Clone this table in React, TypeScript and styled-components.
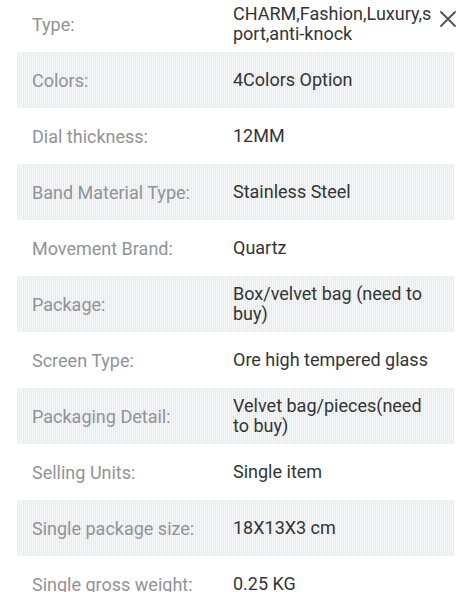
import styled, { createGlobalStyle } from 'styled-components'

const GlobalStyle = createGlobalStyle`
  html, body {
    margin: 0;
    padding: 0;
    background: #ffffff;
    font-family: Roboto, "Noto Sans", sans-serif;
    overflow: hidden;
  }
`

const Sheet = styled.div`
  position: relative;
  width: 475px;
  height: 592px;
  overflow: hidden;
`

const SpecList = styled.div`
  display: flex;
  flex-direction: column;
  margin-top: -4px;
  padding: 0 21px 0 17px;
`

const SpecRow = styled.div<{ $shaded: boolean }>`
  display: grid;
  grid-template-columns: 201px 1fr;
  align-items: center;
  height: 56px;
  padding-left: 15px;
  background: ${props =>
    props.$shaded
      ? 'repeating-linear-gradient(90deg, #e6ebee 0 1px, #f6f8f9 1px 2px)'
      : 'transparent'};
`

const Label = styled.span`
  font-size: 18px;
  color: #919397;
`

const Value = styled.span<{ $breakAll?: boolean }>`
  font-size: 18px;
  line-height: 20px;
  color: #333436;
  max-width: 202px;
  word-break: ${props => (props.$breakAll ? 'break-all' : 'normal')};
`

const CloseButton = styled.button`
  position: absolute;
  top: 10px;
  right: 18px;
  width: 18px;
  height: 18px;
  padding: 0;
  border: 0;
  background: transparent;
  display: flex;
  align-items: center;
  justify-content: center;
`

const specs: [string, string][] = [
  ['Type:', 'CHARM,Fashion,Luxury,sport,anti-knock'],
  ['Colors:', '4Colors Option'],
  ['Dial thickness:', '12MM'],
  ['Band Material Type:', 'Stainless Steel'],
  ['Movement Brand:', 'Quartz'],
  ['Package:', 'Box/velvet bag (need to buy)'],
  ['Screen Type:', 'Ore high tempered glass'],
  ['Packaging Detail:', 'Velvet bag/pieces(need to buy)'],
  ['Selling Units:', 'Single item'],
  ['Single package size:', '18X13X3 cm'],
  ['Single gross weight:', '0.25 KG'],
]

function App() {
  return (
    <Sheet>
      <GlobalStyle />
      <SpecList>
        {specs.map(([label, value], i) => (
          <SpecRow key={label} $shaded={i % 2 === 1}>
            <Label>{label}</Label>
            <Value $breakAll={i === 0}>{value}</Value>
          </SpecRow>
        ))}
      </SpecList>
      <CloseButton aria-label="Close">
        <svg width="18" height="18" viewBox="0 0 18 18">
          <path d="M2 2 L16 16 M16 2 L2 16" stroke="#4f5053" strokeWidth="1.8" strokeLinecap="round" />
        </svg>
      </CloseButton>
    </Sheet>
  )
}

export default App
